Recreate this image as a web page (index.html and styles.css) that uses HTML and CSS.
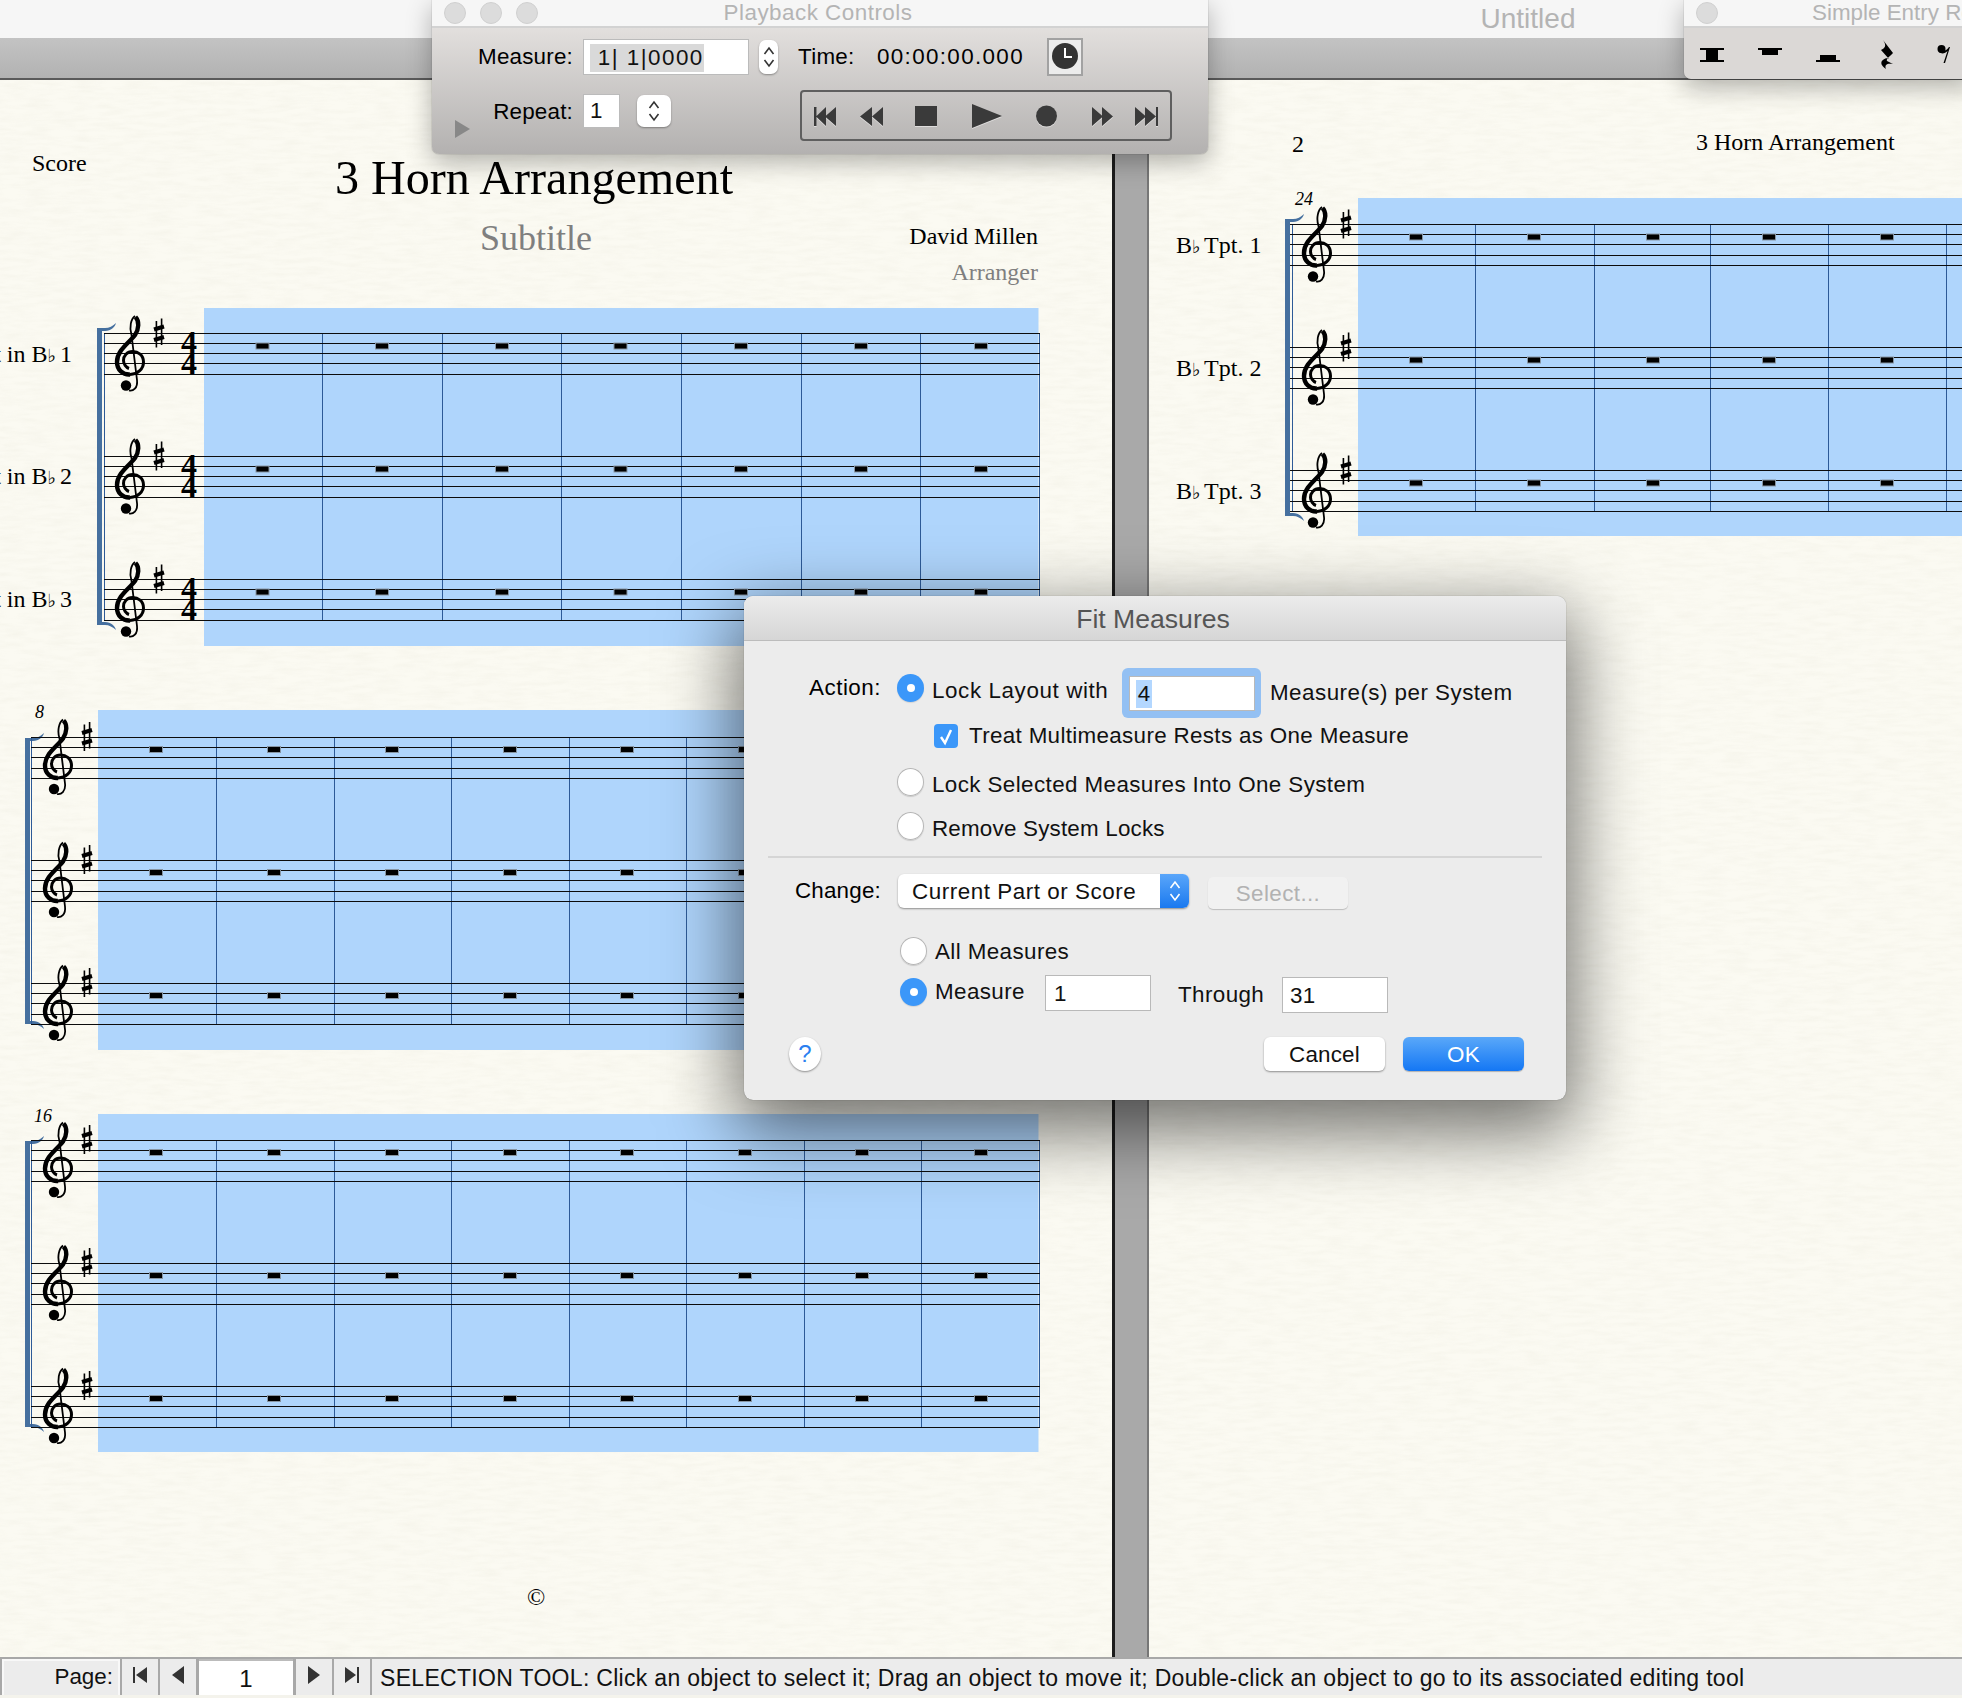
FILE: index.html
```html
<!DOCTYPE html>
<html lang="en">
<head>
<meta charset="utf-8">
<title>Untitled</title>
<link rel="stylesheet" href="styles.css">
</head>
<body>
<svg class="defs" width="0" height="0" aria-hidden="true">
  <defs>
    <filter id="paper" x="0" y="0" width="100%" height="100%">
      <feTurbulence type="fractalNoise" baseFrequency=".04 .22" numOctaves="3" seed="4"/>
      <feColorMatrix type="matrix" values="0 0 0 0 .45  0 0 0 0 .43  0 0 0 0 .3  .9 0 0 0 -.32"/>
    </filter>
    <g id="clef">
      <path class="clef-thin" d="M5,-17 C1,-14 -1,-6 1.5,2 L7,47 C8,55 3,58.5 -1,57.5"/>
      <path class="clef-thick" d="M5.5,-16 C9.5,-12 9,-4 5,2 C0,9 -13,17 -13,29 C-13,37 -7,42 0,41.5"/>
      <path class="clef-mid" d="M0,41.5 C8,41 13.5,36 13.5,29 C13.5,22 8,18.5 2.5,18.5 C-3,18.5 -6.5,23 -6.5,27.5 C-6.5,31 -4,34.5 -1,35.5"/>
      <circle cx="-4" cy="52.5" r="5.2"/>
    </g>
    <g id="sharp">
      <path class="sharp-stem" d="M-2.6,-12 V14.5 M2.6,-14.5 V12"/>
      <path class="sharp-bar" d="M-5,-3.5 L5,-6.5 M-5,7 L5,4"/>
    </g>
    <rect id="rest" class="rest" x="-6.5" y="10" width="13" height="6"/>
    <g id="lines-a" class="staff">
      <path d="M104,.5 H1040 M104,10.5 H1040 M104,20.5 H1040 M104,30.5 H1040 M104,41.5 H1040"/>
    </g>
    <g id="lines-b" class="staff">
      <path d="M31,.5 H1040 M31,10.5 H1040 M31,20.5 H1040 M31,31.5 H1040 M31,41.5 H1040"/>
    </g>
    <g id="lines-c" class="staff">
      <path d="M1290,.5 H1962 M1290,10.5 H1962 M1290,20.5 H1962 M1290,31.5 H1962 M1290,41.5 H1962"/>
    </g>
    <g id="row-a">
      <use href="#lines-a"/>
      <use href="#clef" x="130"/>
      <use href="#sharp" x="159"/>
      <text class="timesig" x="181" y="20">4</text>
      <text class="timesig" x="181" y="41">4</text>
      <use href="#rest" x="262.5"/><use href="#rest" x="382"/><use href="#rest" x="502"/><use href="#rest" x="620.5"/><use href="#rest" x="741"/><use href="#rest" x="861"/><use href="#rest" x="981"/>
    </g>
    <g id="row-b">
      <use href="#lines-b"/>
      <use href="#clef" x="58"/>
      <use href="#sharp" x="87"/>
      <use href="#rest" x="156"/><use href="#rest" x="274"/><use href="#rest" x="392"/><use href="#rest" x="510"/><use href="#rest" x="627"/><use href="#rest" x="745"/><use href="#rest" x="862"/><use href="#rest" x="981"/>
    </g>
    <g id="row-c">
      <use href="#lines-c"/>
      <use href="#clef" x="1317"/>
      <use href="#sharp" x="1346"/>
      <use href="#rest" x="1416"/><use href="#rest" x="1534"/><use href="#rest" x="1653"/><use href="#rest" x="1769"/><use href="#rest" x="1887"/>
    </g>
    <g id="system-b">
      <path class="bracket" d="M25,28 H33 C37,28 41,26 44,23 C43,27 39,31 33,31 H30 V311 H33 C39,311 43,315 44,319 C41,316 37,314 33,314 H25 Z"/>
      <path class="bar" d="M31.5,27 V314 M216.5,27 V314 M334,27 V314 M451.5,27 V314 M569,27 V314 M686.5,27 V314 M804.5,27 V314 M921,27 V314 M1039.5,27 V314"/>
      <use href="#row-b" y="26.5"/>
      <use href="#row-b" y="149.5"/>
      <use href="#row-b" y="272.5"/>
    </g>
    <symbol id="updown" viewBox="0 0 12 24">
      <path class="chev" d="M1.5,9 L6,3 L10.5,9 M1.5,15 L6,21 L10.5,15"/>
    </symbol>
  </defs>
</svg>

<header class="titlebar"><span class="doc-title">Untitled</span></header>
<div class="toolbar"></div>

<main class="workspace">
  <section class="page page-left">
    <svg class="sheet" viewBox="0 80 1112 1577" width="1112" height="1577">
      <rect class="grain" x="0" y="80" width="1112" height="1577"/>
      <text class="serif s24" x="32" y="171">Score</text>
      <text class="serif s48" x="335" y="194">3 Horn Arrangement</text>
      <text class="serif s36 grey" x="480" y="250">Subtitle</text>
      <text class="serif s24 end" x="1038" y="244">David Millen</text>
      <text class="serif s24 end grey" x="1038" y="280">Arranger</text>
      <text class="serif s24 end" x="72" y="362">Trumpet in B<tspan class="flat">♭</tspan> 1</text>
      <text class="serif s24 end" x="72" y="484">Trumpet in B<tspan class="flat">♭</tspan> 2</text>
      <text class="serif s24 end" x="72" y="607">Trumpet in B<tspan class="flat">♭</tspan> 3</text>

      <rect class="sel" x="204" y="308" width="834.5" height="338"/>
      <path class="bracket" d="M97,328 H105 C109,328 113,326 116,323 C115,327 111,331 105,331 H102 V622 H105 C111,622 115,626 116,630 C113,627 109,625 105,625 H97 Z"/>
      <path class="bar" d="M104.5,333 V621 M322.5,333 V621 M442,333 V621 M561.5,333 V621 M681,333 V621 M801,333 V621 M920.5,333 V621 M1039.5,333 V621"/>
      <use href="#row-a" y="333"/>
      <use href="#row-a" y="456"/>
      <use href="#row-a" y="579"/>

      <text class="serif s18 ital" x="35" y="718">8</text>
      <rect class="sel" x="98" y="710" width="940.5" height="340"/>
      <use href="#system-b" y="710"/>
      <text class="serif s18 ital" x="34" y="1122">16</text>
      <rect class="sel" x="98" y="1114" width="940.5" height="338"/>
      <use href="#system-b" y="1113"/>

      <text class="serif s24 mid" x="536" y="1605">©</text>
    </svg>
  </section>
  <div class="gutter"></div>
  <section class="page page-right">
    <svg class="sheet" viewBox="1149 80 813 1577" width="813" height="1577">
      <rect class="grain" x="1149" y="80" width="813" height="1577"/>
      <text class="serif s24" x="1292" y="152">2</text>
      <text class="serif s24" x="1696" y="150">3 Horn Arrangement</text>
      <text class="serif s18 ital" x="1295" y="205">24</text>
      <text class="serif s24" x="1176" y="253">B<tspan class="flat">♭</tspan> Tpt. 1</text>
      <text class="serif s24" x="1176" y="376">B<tspan class="flat">♭</tspan> Tpt. 2</text>
      <text class="serif s24" x="1176" y="499">B<tspan class="flat">♭</tspan> Tpt. 3</text>
      <rect class="sel" x="1358" y="198" width="604" height="338"/>
      <path class="bracket" d="M1285,219 H1293 C1297,219 1301,217 1304,214 C1303,218 1299,222 1293,222 H1290 V513 H1293 C1299,513 1303,517 1304,521 C1301,518 1297,516 1293,516 H1285 Z"/>
      <path class="bar" d="M1292.5,224 V511 M1475,224 V511 M1594,224 V511 M1710.5,224 V511 M1828,224 V511 M1946,224 V511"/>
      <use href="#row-c" y="224"/>
      <use href="#row-c" y="347"/>
      <use href="#row-c" y="470"/>
    </svg>
  </section>
</main>

<footer class="statusbar">
  <div class="sb-label">Page:</div>
  <button class="sb-btn"><svg class="sb-icon" viewBox="0 0 16 18"><path d="M1,1 H3 V17 H1 Z M15,1 V17 L4,9 Z"/></svg></button>
  <button class="sb-btn"><svg class="sb-icon" viewBox="0 0 16 18"><path d="M14,0 V18 L2,9 Z"/></svg></button>
  <div class="sb-page">1</div>
  <button class="sb-btn"><svg class="sb-icon" viewBox="0 0 16 18"><path d="M2,0 V18 L14,9 Z"/></svg></button>
  <button class="sb-btn"><svg class="sb-icon" viewBox="0 0 16 18"><path d="M13,1 H15 V17 H13 Z M1,1 V17 L12,9 Z"/></svg></button>
  <div class="sb-message">SELECTION TOOL: Click an object to select it; Drag an object to move it; Double-click an object to go to its associated editing tool</div>
</footer>
<div class="strip"></div>

<aside class="palette playback">
  <div class="pal-title">
    <span class="light"></span><span class="light"></span><span class="light"></span>
    <span class="pal-name pal-name-spaced">Playback Controls</span>
  </div>
  <div class="pb-body">
    <div class="pb-row pb-row-1">
      <label class="pb-label pb-label-wide">Measure:</label>
      <div class="pb-field pb-field-measure"><span class="pb-selected">&nbsp;1| 1|0000</span></div>
      <div class="stepper stepper-narrow"><svg class="step-icon" viewBox="0 0 12 24"><use href="#updown"/></svg></div>
      <span class="pb-time-label">Time:</span>
      <span class="pb-time">00:00:00.000</span>
      <div class="clock"><svg viewBox="0 0 26 26" class="clock-icon"><circle cx="13" cy="13" r="13"/><path d="M13,5 V14 H20"/></svg></div>
    </div>
    <div class="pb-row pb-row-2">
      <span class="disclosure"></span>
      <label class="pb-label pb-label-short">Repeat:</label>
      <div class="pb-field pb-field-repeat">1</div>
      <div class="stepper stepper-wide"><svg class="step-icon" viewBox="0 0 12 24"><use href="#updown"/></svg></div>
      <div class="transport">
        <svg viewBox="802 92 368 48" width="368" height="48" class="transport-icons">
          <path d="M814,107 H816.5 V126 H814 Z M826,107 V126 L816,116.5 Z M836,107 V126 L825,116.5 Z"/>
          <path d="M872,107 V126 L860,116.5 Z M883,107 V126 L872,116.5 Z"/>
          <rect x="915" y="106" width="22" height="20"/>
          <path d="M972,104 L1002,116 L972,128 Z"/>
          <circle cx="1046.5" cy="116" r="10.5"/>
          <path d="M1092,107 L1103,116.5 L1092,126 Z M1102,107 L1113,116.5 L1102,126 Z"/>
          <path d="M1135,107 L1146,116.5 L1135,126 Z M1145,107 L1156,116.5 L1145,126 Z M1156,107 H1158 V126 H1156 Z"/>
        </svg>
      </div>
    </div>
  </div>
</aside>

<aside class="palette simple-entry">
  <div class="pal-title">
    <span class="light"></span>
    <span class="pal-name pal-name-left">Simple Entry Rests</span>
  </div>
  <div class="se-body">
    <svg class="se-icons" viewBox="1684 28 278 50" width="278" height="50">
      <path d="M1700,48 H1724 V50 H1718 V60 H1724 V62 H1700 V60 H1706 V50 H1700 Z"/>
      <path d="M1758,48 H1782 V50 H1778 V55 H1762 V50 H1758 Z"/>
      <path d="M1820,55 H1836 V60 H1840 V62 H1816 V60 H1820 Z"/>
      <path d="M1883,40 L1893,53 C1889,57 1886,59 1887,61 L1893,64 C1888,63 1884,64 1886,69 C1881,66 1880,62 1883,60 C1885,58 1888,58 1889,59 L1881,50 C1885,48 1887,46 1883,40 Z"/>
      <circle cx="1941.5" cy="49" r="4"/>
      <path d="M1950,47 L1945,63 H1943.5 L1947.5,51 C1945,54 1941,54 1939,52 L1941,50 C1944,52 1947,50 1949,47 Z"/>
    </svg>
  </div>
</aside>

<section class="dialog" role="dialog" aria-label="Fit Measures">
  <header class="dlg-head">Fit Measures</header>
  <div class="dlg-body">
    <div class="row row-action">
      <span class="dlg-label up">Action:</span>
      <span class="radio on up"></span>
      <span class="txt txt-with up-small">Lock Layout with</span>
      <div class="focus-ring"><div class="field field-focus"><span class="hl">4</span></div></div>
      <span class="txt txt-per">Measure(s) per System</span>
    </div>
    <div class="row row-check">
      <span class="check"><svg viewBox="0 0 24 24" class="check-icon"><path d="M7,13 L11,19 L17,6"/></svg></span>
      <span class="txt txt-treat">Treat Multimeasure Rests as One Measure</span>
    </div>
    <div class="row row-radio row-lock">
      <span class="radio"></span>
      <span class="txt txt-low">Lock Selected Measures Into One System</span>
    </div>
    <div class="row row-radio row-remove">
      <span class="radio"></span>
      <span class="txt txt-low txt-remove">Remove System Locks</span>
    </div>
    <div class="sep"></div>
    <div class="row row-change">
      <span class="dlg-label up-small">Change:</span>
      <div class="popup"><span class="popup-text">Current Part or Score</span><span class="popup-arrows"><svg class="popup-icon" viewBox="0 0 12 24"><use href="#updown"/></svg></span></div>
      <div class="btn-disabled">Select...</div>
    </div>
    <div class="row row-all">
      <span class="radio"></span>
      <span class="txt txt-all">All Measures</span>
    </div>
    <div class="row row-range">
      <span class="radio on up-small"></span>
      <span class="txt up-small txt-measure">Measure</span>
      <div class="field field-from">1</div>
      <span class="txt txt-through">Through</span>
      <div class="field field-to">31</div>
    </div>
    <div class="row row-foot">
      <div class="help">?</div>
      <div class="btn btn-cancel">Cancel</div>
      <div class="btn btn-ok">OK</div>
    </div>
  </div>
</section>
</body>
</html>
```
FILE: styles.css
```css
* { box-sizing: border-box; }
html, body { margin: 0; padding: 0; }
body {
  position: relative;
  width: 1962px;
  height: 1698px;
  overflow: hidden;
  display: flex;
  flex-direction: column;
  background: #fbfaf2;
  font-family: "Liberation Sans", Arial, sans-serif;
  font-size: 22.4px;
  color: #111;
}
.defs { position: absolute; }

/* window chrome */
.titlebar {
  height: 38px;
  background: #f6f6f6;
  display: flex;
  align-items: center;
  justify-content: center;
  padding-left: 1094px;
}
.doc-title { font-size: 28px; color: #b4b4b4; }
.toolbar {
  height: 42px;
  background: linear-gradient(#c3c3c3, #b2b2b2);
  border-bottom: 2px solid #5a5a5a;
}

.workspace { height: 1577px; display: flex; }
.page { background: #fbfaf2; overflow: hidden; }
.page-left { width: 1112px; }
.page-right { width: 813px; }
.sheet { display: block; }
.gutter {
  width: 37px;
  background: #a9a9a9;
  border-left: 3px solid #1c1c1c;
  border-right: 2px solid #777;
}

/* score */
.grain { filter: url(#paper); opacity: .13; }
.sel { fill: #afd5fc; }
.staff path { stroke: #0c0c0c; stroke-width: 1; fill: none; shape-rendering: crispEdges; }
.bar { stroke: #2d5a97; stroke-width: 1; fill: none; shape-rendering: crispEdges; }
.bracket { fill: #46709f; }
.rest { fill: #000; stroke: #8795a3; stroke-width: 1; }
.clef-thin { fill: none; stroke: #000; stroke-width: 1.8; }
.clef-thick { fill: none; stroke: #000; stroke-width: 4.4; }
.clef-mid { fill: none; stroke: #000; stroke-width: 3; }
.sharp-stem { stroke: #000; stroke-width: 1.6; fill: none; }
.sharp-bar { stroke: #000; stroke-width: 4; fill: none; }
.serif { font-family: "Liberation Serif", "Times New Roman", serif; fill: #000; }
.s18 { font-size: 18px; }
.s24 { font-size: 24px; }
.s36 { font-size: 36px; }
.s48 { font-size: 48.1px; }
.ital { font-style: italic; }
.grey { fill: #7f7f7f; }
.end { text-anchor: end; }
.mid { text-anchor: middle; }
.flat { font-family: "DejaVu Sans", sans-serif; font-size: 18px; letter-spacing: -2px; }
.timesig { font-family: "Liberation Serif", serif; font-weight: bold; font-size: 32px; fill: #000; }

/* status bar */
.statusbar {
  height: 38px;
  display: flex;
  align-items: stretch;
  gap: 2px;
  padding-top: 2px;
  background: #a8a8a8;
}
.strip { height: 3px; background: #f4f3ec; }
.sb-label {
  width: 118px;
  margin-left: 2px;
  background: #ececec;
  border: 2px solid #f8f8f8;
  border-bottom: 0;
  text-align: right;
  padding: 3px 5px 0 0;
}
.sb-btn {
  width: 36px;
  padding: 7px 0 0;
  border: 0;
  background: #ececec;
  display: flex;
  justify-content: center;
}
.sb-icon { width: 16px; height: 18px; fill: #333; }
.sb-page {
  width: 94px;
  margin: 0 1px;
  background: #fff;
  border-top: 2px solid #bbb;
  text-align: center;
  font-size: 24px;
  padding-top: 4px;
}
.sb-message { flex: 1; background: #ececec; padding: 6px 0 0 8px; white-space: nowrap; font-size: 23px; letter-spacing: .31px; }

/* floating palettes */
.palette {
  position: absolute;
  top: 0;
  border-radius: 0 0 7px 7px;
  box-shadow: 0 8px 26px rgba(0, 0, 0, .3), 0 0 1px rgba(0, 0, 0, .6);
  overflow: hidden;
}
.playback { left: 432px; width: 776px; height: 154px; }
.simple-entry { left: 1684px; width: 290px; height: 79px; }
.pal-title {
  height: 28px;
  background: #f6f6f6;
  border-bottom: 2px solid #d2d2d2;
  display: flex;
  align-items: center;
  padding-left: 12px;
  gap: 14px;
  position: relative;
}
.light { width: 22px; height: 22px; border-radius: 50%; background: #dcdcdc; border: 1px solid #d0d0d0; }
.pal-name { position: absolute; left: 0; right: 0; text-align: center; color: #b4b4b4; font-size: 22.4px; line-height: 24px; }
.pal-name-spaced { letter-spacing: .5px; margin-left: -4px; }
.pal-name-left { left: 128px; right: auto; white-space: nowrap; }
.pb-body { height: 126px; padding-top: 10px; background: linear-gradient(#e2dfdd, #b3b1b0); }
.pb-row { display: flex; align-items: center; }
.pb-row-1 { height: 38px; }
.pb-row-2 { height: 51px; margin-top: 14px; }
.pb-label { text-align: right; color: #000; letter-spacing: .2px; }
.pb-label-wide { width: 141px; }
.pb-label-short { width: 103px; margin-top: -8px; }
.pb-field { background: #fff; border: 1px solid #bbb; }
.pb-field-measure { width: 166px; height: 36px; margin-left: 10px; padding: 4px 6px; line-height: 28px; letter-spacing: 1.5px; }
.pb-selected { display: inline-block; background: #d9d9d9; width: 114px; white-space: nowrap; }
.stepper {
  background: #fff;
  border-radius: 7px;
  box-shadow: 0 1px 2px rgba(0, 0, 0, .35);
  display: flex;
  align-items: center;
  justify-content: center;
  color: #333;
}
.stepper-narrow { width: 19px; height: 34px; margin-left: 10px; }
.stepper-wide { width: 34px; height: 32px; margin-left: 17px; margin-top: -10px; }
.step-icon { width: 12px; height: 24px; }
.chev { fill: none; stroke: currentColor; stroke-width: 1.6; }
.pb-time-label { margin-left: 20px; width: 79px; color: #000; letter-spacing: .3px; }
.pb-time { width: 170px; color: #000; letter-spacing: 1.35px; }
.clock {
  width: 36px;
  height: 38px;
  background: #ececec;
  border: 2px solid #a2a2a2;
  display: flex;
  align-items: center;
  justify-content: center;
}
.clock-icon { width: 26px; height: 26px; margin-top: -3px; }
.clock-icon circle { fill: #333; }
.clock-icon path { fill: none; stroke: #fff; stroke-width: 2; }
.disclosure {
  margin-left: 23px;
  width: 0;
  height: 0;
  margin-top: 27px;
  border-left: 15px solid #888;
  border-top: 9px solid transparent;
  border-bottom: 9px solid transparent;
}
.pb-field-repeat { width: 37px; height: 34px; margin-left: 10px; margin-top: -10px; padding-left: 6px; line-height: 32px; }
.transport {
  width: 372px;
  height: 51px;
  margin-left: 129px;
  border: 2px solid #5f5f5f;
  border-radius: 4px;
}
.transport-icons { display: block; fill: #3a3a3a; filter: drop-shadow(0 1px 0 rgba(255, 255, 255, .5)); }
.se-body { height: 51px; background: #dbd8d6; }
.se-icons { display: block; fill: #000; }

/* dialog */
.dialog {
  position: absolute;
  left: 744px;
  top: 596px;
  width: 822px;
  height: 504px;
  background: #ececec;
  border-radius: 9px;
  box-shadow: 0 24px 72px 8px rgba(0, 0, 0, .55), 0 0 1px rgba(0, 0, 0, .5);
  overflow: hidden;
}
.dlg-head {
  height: 45px;
  background: linear-gradient(#ececec, #d6d6d6);
  border-bottom: 1px solid #bcbcbc;
  text-align: center;
  line-height: 46px;
  font-size: 26.6px;
  color: #555;
  padding-right: 4px;
}
.dlg-body { padding-top: 27px; }
.row { display: flex; align-items: center; position: relative; }
.txt { white-space: nowrap; letter-spacing: .4px; color: #111; }
.dlg-label { width: 137px; text-align: right; margin-right: 16px; color: #000; letter-spacing: .5px; }
.up { margin-bottom: 10px; }
.up-small { margin-bottom: 4px; }
.radio {
  flex: none;
  width: 27px;
  height: 28px;
  border-radius: 50%;
  background: #fff;
  box-shadow: inset 0 0 0 1px #b6b6b6, 0 1px 1px rgba(0, 0, 0, .15);
  margin-right: 8px;
  position: relative;
}
.radio.on { background: #3b97f9; box-shadow: 0 1px 1px rgba(0, 0, 0, .1); }
.radio.on::after {
  content: "";
  position: absolute;
  left: 10px;
  top: 10px;
  width: 8px;
  height: 8px;
  border-radius: 50%;
  background: #fff;
}
.row-action { height: 50px; }
.txt-with { width: 190px; letter-spacing: .6px; }
.focus-ring {
  width: 139px;
  height: 50px;
  padding: 8px 6px 7px 7px;
  background: #93c0f3;
  border-radius: 6px;
}
.field { background: #fff; box-shadow: inset 0 0 0 1px #b9b9b9; }
.field-focus { height: 35px; padding: 4px 7px; line-height: 28px; }
.hl { display: inline-block; width: 16px; height: 28px; background: #b3d7ff; text-align: center; }
.txt-per { margin-left: 9px; letter-spacing: .47px; }
.row-check { height: 24px; margin-top: 6px; padding-left: 190px; }
.check {
  width: 24px;
  height: 24px;
  border-radius: 4px;
  background: #3b97f9;
  margin-right: 11px;
}
.check-icon { display: block; width: 24px; height: 24px; fill: none; stroke: #fff; stroke-width: 2.4; }
.txt-treat { letter-spacing: .33px; }
.row-radio { height: 28px; padding-left: 153px; }
.row-lock { margin-top: 20px; }
.row-remove { margin-top: 16px; }
.txt-low { margin-top: 5px; }
.txt-remove { letter-spacing: .2px; }
.sep { height: 2px; margin: 16px 24px; background: #d5d5d5; }
.row-change { height: 36px; align-items: flex-start; }
.row-change .dlg-label { line-height: 34px; letter-spacing: .2px; }
.popup {
  width: 291px;
  height: 34px;
  background: #fff;
  border-radius: 6px;
  box-shadow: 0 1px 2px rgba(0, 0, 0, .4);
  display: flex;
  overflow: hidden;
  margin-left: 1px;
}
.popup-text { flex: 1; padding-left: 14px; line-height: 36px; letter-spacing: .55px; white-space: nowrap; }
.popup-arrows {
  width: 29px;
  background: linear-gradient(#5aa6fa, #1a79ef);
  display: flex;
  align-items: center;
  justify-content: center;
  color: #fff;
}
.popup-icon { width: 14px; height: 24px; }
.btn-disabled {
  width: 140px;
  height: 32px;
  margin: 3px 0 0 19px;
  background: #f1f1f1;
  border-radius: 5px;
  box-shadow: 0 1px 1px rgba(0, 0, 0, .2);
  color: #b2b2b2;
  text-align: center;
  line-height: 34px;
  letter-spacing: .4px;
}
.row-all { height: 28px; margin-top: 27px; padding-left: 156px; }
.txt-all { margin-top: 2px; }
.row-range { height: 38px; margin-top: 10px; padding-left: 156px; }
.txt-measure { width: 110px; }
.field-from { width: 106px; height: 36px; padding-left: 9px; line-height: 38px; margin-bottom: 2px; }
.txt-through { margin-left: 27px; width: 104px; margin-top: 2px; }
.field-to { width: 106px; height: 36px; padding-left: 8px; line-height: 38px; margin-top: 2px; letter-spacing: .3px; }
.row-foot { height: 35px; margin-top: 23px; }
.help {
  width: 32px;
  height: 34px;
  margin-left: 45px;
  border-radius: 50%;
  background: #fff;
  box-shadow: 0 1px 2px rgba(0, 0, 0, .4);
  color: #2b7ff0;
  text-align: center;
  line-height: 34px;
  font-size: 24px;
}
.btn {
  width: 121px;
  height: 34px;
  border-radius: 6px;
  background: #fff;
  box-shadow: 0 1px 2px rgba(0, 0, 0, .4);
  text-align: center;
  line-height: 36px;
  letter-spacing: .2px;
}
.btn-cancel { margin-left: 443px; }
.btn-ok { margin-left: 18px; color: #fff; background: linear-gradient(#5aa8f9, #1477f4); box-shadow: 0 1px 1px rgba(0, 0, 0, .25); }
```
